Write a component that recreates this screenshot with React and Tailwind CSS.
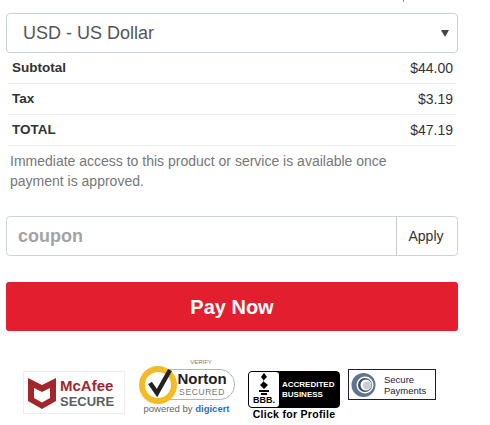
import React from "react";

const font = { fontFamily: '"Liberation Sans", Arial, sans-serif' };

const McAfeeBadge = () => (
  <div className="mt-[12px] ml-[17px] flex h-[43px] w-[102px] items-center gap-[4px] border border-[#eeeeee] pl-[4px]">
    <svg width="28" height="33" viewBox="0 0 28 33">
      <path d="M0 2 L14 9 L28 2 V25 L14 33 L0 25 Z" fill="#a3262d" />
      <path d="M6 12 L14 16 L22 12 V22 L14 26.5 L6 22 Z" fill="#fff" />
    </svg>
    <div className="flex flex-col">
      <span className="text-[15px] leading-[17px] font-bold text-[#a3262d]">McAfee</span>
      <span className="text-[13px] leading-[15px] font-bold text-[#5c5f61]">SECURE</span>
    </div>
  </div>
);

const NortonBadge = () => (
  <div className="relative ml-[14px] h-[56px] w-[97px]">
    <div className="flex justify-center pl-[27px] text-[6px] leading-[7px] text-[#777777]">VERIFY</div>
    <div className="mt-[3px] ml-[19px] flex h-[31px] w-[77px] flex-col items-center rounded-r-[15px] border border-[#b5b5b5] pl-[11px]">
      <span className="text-[15px] leading-[17px] font-bold text-[#222222]">Norton</span>
      <span className="text-[8.5px] leading-[10px] tracking-[0.6px] text-[#777777]">SECURED</span>
    </div>
    <div className="mt-[3px] flex justify-center pr-[4px] pl-[2px] text-[9.5px] leading-[11px] text-[#666666]">
      powered by&nbsp;<span className="font-bold text-[#1f74c2]">digicert</span>
    </div>
    {/* Yellow seal sits over the pill */}
    <svg className="absolute top-[5px] left-0" width="40" height="40" viewBox="0 0 40 40">
      <circle cx="19" cy="21" r="16" fill="#fff" stroke="#f4bb27" strokeWidth="6" />
      <path d="M11 19 L18 29 L31 6" fill="none" stroke="#222" strokeWidth="4.5" />
    </svg>
  </div>
);

const BbbBadge = () => (
  <div className="mt-[12px] ml-[12px] flex w-[92px] flex-col items-center">
    <div className="flex h-[37px] w-[92px] overflow-hidden rounded-[4px] border border-black bg-black">
      <div className="flex w-[30px] flex-col items-center rounded-r-[3px] bg-white">
        <svg width="14" height="23" viewBox="0 0 14 23">
          <path d="M7 1 L10 5 L6 9 L11 13 L7 17 L3 13 L7 9 L4 5 Z" fill="#000" />
          <rect x="2" y="18" width="10" height="2" fill="#000" />
          <rect x="4" y="21" width="6" height="2" fill="#000" />
        </svg>
        <span className="text-[9px] leading-[10px] font-bold text-black">BBB.</span>
      </div>
      <div className="flex flex-1 flex-col justify-center pl-[3px] text-[8px] leading-[10px] font-bold text-white">
        <span>ACCREDITED</span>
        <span>BUSINESS</span>
      </div>
    </div>
    <span className="text-[10.5px] leading-[13px] font-bold tracking-[0.3px] text-black">Click for Profile</span>
  </div>
);

const SecurePaymentsBadge = () => (
  <div className="mt-[10px] ml-[8px] flex h-[31px] w-[88px] items-center border border-[#1d1d3a] bg-white pl-[2px]">
    <svg width="25" height="26" viewBox="0 0 25 26">
      <circle cx="12.5" cy="13" r="12" fill="#5e7591" />
      <circle cx="14" cy="13" r="8.5" fill="#fff" />
      <circle cx="14" cy="13" r="7" fill="#3d4e66" />
      <circle cx="15" cy="13" r="5.5" fill="#fff" />
      <circle cx="16" cy="13.5" r="4" fill="#c9ced4" />
    </svg>
    <div className="ml-[8px] flex flex-col text-[9.5px] leading-[11px] text-[#222244]">
      <span>Secure</span>
      <span>Payments</span>
    </div>
  </div>
);

const Row = ({ label, value }) => (
  <div className="mx-[2px] flex h-[31px] items-center justify-between border-b border-[#eeeeee] pr-[3px] pl-[4px] text-[14px] text-[#333333]">
    <span className="text-[13.5px] font-bold">{label}</span>
    <span>{value}</span>
  </div>
);

export default function App() {
  return (
    <div className="relative h-[425px] w-[490px] overflow-hidden bg-white pt-[13px]" style={font}>
      {/* Tail of text cut off at the top edge */}
      <div className="absolute top-0 left-[403px] h-[2px] w-px bg-[#888888]" />

      <div className="ml-[6px] w-[452px]">
        {/* Currency select */}
        <div className="flex h-[40px] items-center justify-between rounded-[4px] border border-[#c3d3dc] pr-[8px] pl-[16px] text-[18px] text-[#555555]">
          <span>USD - US Dollar</span>
          <span className="h-0 w-0 border-x-[4px] border-t-[7px] border-x-transparent border-t-[#444444]" />
        </div>

        <Row label="Subtotal" value="$44.00" />
        <Row label="Tax" value="$3.19" />
        <Row label="TOTAL" value="$47.19" />

        <p className="mt-[5px] pl-[4px] text-[14px] leading-[20px] text-[#777777]">
          Immediate access to this product or service is available once
          <br />
          payment is approved.
        </p>

        {/* Coupon */}
        <div className="mt-[25px] flex h-[40px] rounded-[4px] border border-[#ccd3dc]">
          <div className="flex flex-1 items-center pl-[11px] text-[18px] font-bold text-[#a3a3a3]">coupon</div>
          <div className="flex w-[61px] items-center justify-center border-l border-[#c8ccd0] pr-[2px] text-[14px] text-[#333333]">Apply</div>
        </div>

        {/* Pay button */}
        <div className="mt-[26px] flex h-[49px] items-center justify-center rounded-[3px] bg-[#e31f2f] text-[20px] font-bold text-white">
          Pay Now
        </div>
      </div>

      {/* Trust badges */}
      <div className="mt-[28px] flex items-start pl-[6px]">
        <McAfeeBadge />
        <NortonBadge />
        <BbbBadge />
        <SecurePaymentsBadge />
      </div>
    </div>
  );
}
